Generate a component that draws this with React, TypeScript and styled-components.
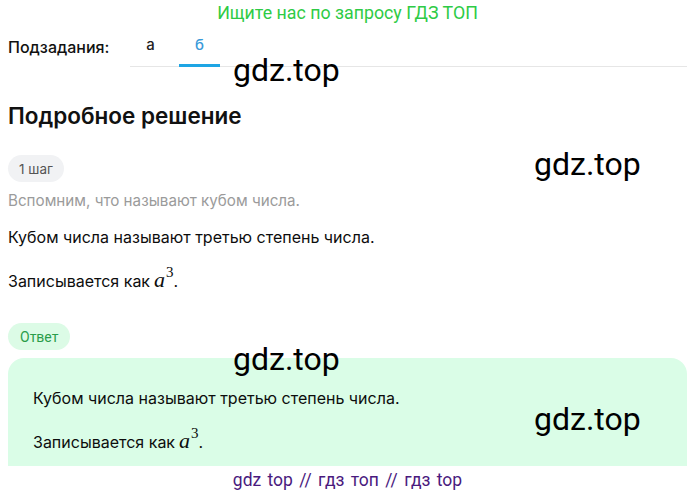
import React from "react";
import styled, { createGlobalStyle } from "styled-components";

const Global = createGlobalStyle`
  html, body { margin: 0; padding: 0; background: #fff; }
  body { font-family: Inter, "Noto Sans", sans-serif; color: #111; overflow: hidden; }
  * { box-sizing: border-box; }
`;

const Page = styled.div`
  position: relative;
  width: 695px;
  min-height: 494px;
  padding: 0 8px;
`;

const Banner = styled.div`
  height: 24px;
  display: flex;
  align-items: center;
  justify-content: center;
  font-family: Roboto, sans-serif;
  font-size: 17.8px;
  color: #2ecb45;
`;

const TabsRow = styled.div`
  display: flex;
  align-items: flex-end;
  margin-top: 8px;
  height: 35px;
`;

const TabsLabel = styled.div`
  width: 122px;
  font-size: 16px;
  font-weight: 500;
  padding-bottom: 10px;
`;

const Tabs = styled.div`
  flex: 1;
  display: flex;
  border-bottom: 1px solid #e6e6e6;
`;

const Tab = styled.div<{ $active?: boolean }>`
  width: 41px;
  margin-right: 8px;
  text-align: center;
  font-size: 15px;
  font-weight: 500;
  padding-bottom: 10px;
  color: ${(p) => (p.$active ? "#3a9ad9" : "#222")};
  border-bottom: 3px solid ${(p) => (p.$active ? "#1ea5e4" : "transparent")};
  margin-bottom: -1px;
`;

const Heading = styled.h2`
  margin: 36px 0 0;
  font-size: 22.5px;
  font-weight: 600;
  line-height: 26px;
`;

const Pill = styled.div<{ $green?: boolean }>`
  display: inline-flex;
  align-items: center;
  height: 27px;
  padding: 0 ${(p) => (p.$green ? "12px" : "11px")};
  border-radius: 14px;
  font-size: ${(p) => (p.$green ? "14px" : "13.5px")};
  background: ${(p) => (p.$green ? "#dcfbe6" : "#f1f2f4")};
  color: ${(p) => (p.$green ? "#2a9d4a" : "#555")};
  font-family: ${(p) => (p.$green ? "Roboto, sans-serif" : "inherit")};
`;

const StepPill = styled(Pill)`
  margin-top: 26px;
`;

const Hint = styled.p`
  margin: 9px 0 0;
  font-size: 15.2px;
  line-height: 20px;
  color: #9b9b9b;
`;

const Para = styled.p`
  margin: 0;
  font-size: 16px;
  line-height: 22px;
  color: #0d0d0d;
`;

const FirstPara = styled(Para)`
  margin-top: 15px;
`;

const SecondPara = styled(Para)`
  margin-top: 21px;
`;

const MathA = styled.span`
  font-family: "Liberation Serif", "DejaVu Serif", serif;
  font-style: italic;
  font-size: 22px;
  margin-left: 4px;
`;

const Sup = styled.sup`
  font-family: "Liberation Serif", serif;
  font-style: normal;
  font-size: 15px;
  line-height: 0;
  vertical-align: 0.7em;
  margin-left: 1px;
`;

const AnswerPill = styled(Pill)`
  margin-top: 31px;
`;

const AnswerBox = styled.div`
  margin-top: 8px;
  background: #dafde7;
  border-radius: 16px 16px 0 0;
  padding: 29px 25px 40px;
  min-height: 160px;
`;

const BoxFirst = styled(Para)``;

const BoxSecond = styled(Para)`
  margin-top: 21px;
`;

const Watermark = styled.div<{ $x: number; $y: number }>`
  position: absolute;
  left: ${(p) => p.$x}px;
  top: ${(p) => p.$y}px;
  font-family: Roboto, sans-serif;
  font-size: 32px;
  color: #000;
  pointer-events: none;
`;

const Footer = styled.div`
  position: fixed;
  left: 0;
  right: 0;
  bottom: 0;
  height: 28px;
  background: #fff;
  display: flex;
  align-items: center;
  justify-content: center;
  font-family: Roboto, sans-serif;
  font-size: 17.5px;
  color: #4a1a7e;
  word-spacing: 2px;
`;

export default function App() {
  return (
    <>
      <Global />
      <Page>
        <Banner>Ищите нас по запросу ГДЗ ТОП</Banner>
        <TabsRow>
          <TabsLabel>Подзадания:</TabsLabel>
          <Tabs>
            <Tab>а</Tab>
            <Tab $active>б</Tab>
          </Tabs>
        </TabsRow>
        <Heading>Подробное решение</Heading>
        <StepPill>1 шаг</StepPill>
        <Hint>Вспомним, что называют кубом числа.</Hint>
        <FirstPara>Кубом числа называют третью степень числа.</FirstPara>
        <SecondPara>
          Записывается как<MathA>a</MathA>
          <Sup>3</Sup>.
        </SecondPara>
        <div>
          <AnswerPill $green>Ответ</AnswerPill>
        </div>
        <AnswerBox>
          <BoxFirst>Кубом числа называют третью степень числа.</BoxFirst>
          <BoxSecond>
            Записывается как<MathA>a</MathA>
            <Sup>3</Sup>.
          </BoxSecond>
        </AnswerBox>
        <Watermark $x={233} $y={51}>gdz.top</Watermark>
        <Watermark $x={534} $y={145}>gdz.top</Watermark>
        <Watermark $x={233} $y={340}>gdz.top</Watermark>
        <Watermark $x={534} $y={400}>gdz.top</Watermark>
      </Page>
      <Footer>gdz top // гдз топ // гдз top</Footer>
    </>
  );
}
